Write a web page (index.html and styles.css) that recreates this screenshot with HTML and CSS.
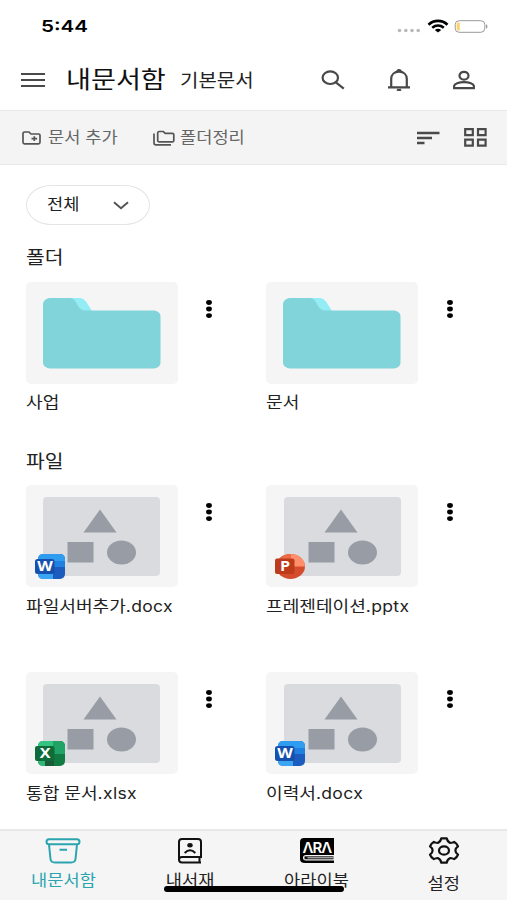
FILE: index.html
```
<!DOCTYPE html>
<html lang="ko">
<head>
  <meta charset="utf-8">
  <meta name="viewport" content="width=device-width">
  <title>내문서함</title>
  <link rel="stylesheet" href="styles.css">
</head>
<body>
  <!-- shared icons -->
  <svg class="defs" width="0" height="0">
    <symbol id="folder" viewBox="0 0 118 71">
      <path fill="#93edf4" d="M24 0h12c4 0 6 2 8 5l5 8H30z"/>
      <path fill="#80d4da" d="M8 0h18c4 0 6 2 8 6 2 4 4 6.500 9 6.500h67c4.500 0 7.500 2.500 7.500 6v46c0 3.500-3 6-7.500 6H8c-4.500 0-8-2.500-8-6V6.500C0 2.500 3.500 0 8 0z"/>
    </symbol>
    <symbol id="preview" viewBox="0 0 117 79">
      <rect width="117" height="79" rx="4" fill="#d9dbdf"/>
      <path fill="#989da5" d="M57 12.500l16.500 23h-33z"/>
      <rect x="24.500" y="45" width="26" height="20.500" fill="#989da5"/>
      <ellipse cx="78.500" cy="55.500" rx="14.500" ry="12" fill="#989da5"/>
    </symbol>
    <symbol id="dots" viewBox="0 0 8 20">
      <ellipse cx="4" cy="3.500" rx="2.900" ry="2.400"/>
      <ellipse cx="4" cy="10" rx="2.900" ry="2.400"/>
      <ellipse cx="4" cy="16.600" rx="2.900" ry="2.400"/>
    </symbol>
    <symbol id="word" viewBox="0 0 30 25">
      <rect x="3" width="27" height="25" rx="5" fill="#1b5cbe"/>
      <path fill="#2f9cf0" d="M8 0h17c3 0 5 2 5 5v2H3V5c0-3 2-5 5-5z"/>
      <path fill="#2080e0" d="M3 7h27v6H3z"/>
      <path fill="#3aa5f2" d="M3 19h15v6H8c-3 0-5-2-5-5z"/>
      <rect y="5" width="19.500" height="15" rx="2.500" fill="#1650ae"/>
    </symbol>
    <symbol id="ppt" viewBox="0 0 30 25">
      <ellipse cx="15.500" cy="12.500" rx="14.500" ry="12.500" fill="#d54c2c"/>
      <path fill="#ff8f6b" d="M15.500 0C24 0 30 5.500 30 12.500H15.500z"/>
      <path fill="#ed6c47" d="M15.500 0v12.500H1C1 5.500 7 0 15.500 0z"/>
      <rect y="4.500" width="19.500" height="15.500" rx="2" fill="#bd3b1b"/>
    </symbol>
    <symbol id="excel" viewBox="0 0 30 25">
      <rect x="3" width="27" height="25" rx="5" fill="#107c41"/>
      <path fill="#33c481" d="M8 0h10v7H3V5c0-3 2-5 5-5z"/>
      <path fill="#21a366" d="M18 0h7c3 0 5 2 5 5v8H18z"/>
      <path fill="#30b878" d="M3 19h7v6H8c-3 0-5-2-5-5z"/>
      <path fill="#185c37" d="M10 19h9v6h-9z"/>
      <rect y="5" width="19.500" height="15" rx="2" fill="#0f6c3a"/>
    </symbol>
  </svg>

  <div class="status">
    <span class="time wide">5:44</span>
    <svg width="92" height="18" viewBox="0 0 92 18">
      <g fill="#b9b9b9">
        <circle cx="2.500" cy="12.500" r="1.800"/>
        <circle cx="8.800" cy="12.500" r="1.800"/>
        <circle cx="15" cy="12.500" r="1.800"/>
        <circle cx="21.200" cy="12.500" r="1.800"/>
      </g>
      <g fill="none" stroke="#000" stroke-width="2.700">
        <path d="M31.500 6.700c5.500-5 13.500-5 19 0"/>
        <path d="M35.200 9.800c3.500-2.900 8.100-2.900 11.600 0"/>
      </g>
      <path d="M37.800 12q3.200-2.300 6.400 0L41 14.500z"/>
      <rect x="58.200" y="2.700" width="29.600" height="11.600" rx="4" fill="#fff" stroke="#999"/>
      <path d="M62.800 4.500H61q-1.300.300-1.300 2v4q0 1.700 1.300 2h1.800z" fill="#fbd36c"/>
      <path d="M89 6q3 2.500 0 5z" fill="#999"/>
    </svg>
  </div>

  <header>
    <svg class="menu" width="24" height="16" viewBox="0 0 24 16" stroke="#4a4a4a" stroke-width="2.200"><path d="M0 2h24M0 8h24M0 14h24"/></svg>
    <h1 class="wide">내문서함</h1>
    <span class="sub wide">기본문서</span>
    <div class="actions">
      <svg width="24" height="20" viewBox="0 0 24 20" fill="none" stroke="#484848" stroke-width="2.200">
        <ellipse cx="9.300" cy="7.700" rx="7.700" ry="6.300"/>
        <path d="M14.800 12.300l8 6.300"/>
      </svg>
      <svg width="22" height="22" viewBox="0 0 22 22" fill="none" stroke="#484848" stroke-width="2.200">
        <path d="M0 18.300h22M3.200 18V10c0-4.300 3.200-7.300 7.800-7.300s7.800 3 7.800 7.300v8"/>
        <path d="M9 2.200q2-2 4 0M9 20.500q2 1.200 4 0"/>
      </svg>
      <svg width="22" height="20" viewBox="0 0 22 20" fill="none" stroke="#484848" stroke-width="2.200">
        <ellipse cx="11" cy="5.700" rx="4.500" ry="3.900"/>
        <path d="M1 18.200v-1.700c0-2.700 5-4.300 10-4.300s10 1.600 10 4.300v1.700z" stroke-linejoin="round"/>
      </svg>
    </div>
  </header>

  <div class="toolbar">
    <svg class="add" width="19" height="14" viewBox="0 0 19 14" fill="none" stroke="#555" stroke-width="1.700">
      <path d="M2.500 1H7l2 2h7.500q1.500 0 1.500 1.300v7q0 1.500-1.500 1.500h-14Q1 12.800 1 11.300v-9Q1 1 2.500 1z"/>
      <path d="M12.300 5.300v4.800M9.500 7.700h5.600"/>
    </svg>
    <span class="label wide">문서 추가</span>
    <svg class="arrange" width="22" height="16" viewBox="0 0 22 16" fill="none" stroke="#555" stroke-width="1.700">
      <path d="M6.300 1.500h4l2 1.800h6.900q1.600 0 1.600 1.300v5.800q0 1.400-1.600 1.400H6.300q-1.600 0-1.600-1.400V2.900q0-1.400 1.600-1.400z"/>
      <path d="M1 3.500V13q0 1.800 2 1.800h15"/>
    </svg>
    <span class="label wide">폴더정리</span>
    <div class="views">
      <svg width="23" height="14" viewBox="0 0 23 14" stroke="#4a4a4a" stroke-width="2.300"><path d="M0 2h22.500M0 7h15M0 12h7.500"/></svg>
      <svg width="23" height="19" viewBox="0 0 23 19" fill="none" stroke="#4a4a4a" stroke-width="2.200">
        <path d="M1.200 1.200h7.600v6H1.200zM14 1.200h7.600v6H14zM1.200 11.600h7.600v6H1.200zM14 11.600h7.600v6H14z"/>
      </svg>
    </div>
  </div>

  <main>
    <div class="filter">
      <span class="wide">전체</span>
      <svg width="16" height="9" viewBox="0 0 16 9" fill="none" stroke="#555" stroke-width="2"><path d="M1 1.300l7 6 7-6"/></svg>
    </div>

    <h2 class="wide">폴더</h2>
    <div class="grid folders">
      <div class="item">
        <div class="thumb"><svg width="118" height="71"><use href="#folder"/></svg></div>
        <svg class="more" width="8" height="20"><use href="#dots"/></svg>
        <p class="wide">사업</p>
      </div>
      <div class="item">
        <div class="thumb"><svg width="118" height="71"><use href="#folder"/></svg></div>
        <svg class="more" width="8" height="20"><use href="#dots"/></svg>
        <p class="wide">문서</p>
      </div>
    </div>

    <h2 class="wide">파일</h2>
    <div class="grid files">
      <div class="item">
        <div class="thumb">
          <svg width="117" height="79"><use href="#preview"/></svg>
          <div class="badge"><svg width="30" height="25"><use href="#word"/></svg><b>W</b></div>
        </div>
        <svg class="more" width="8" height="20"><use href="#dots"/></svg>
        <p class="wide">파일서버추가<span class="ext">.docx</span></p>
      </div>
      <div class="item">
        <div class="thumb">
          <svg width="117" height="79"><use href="#preview"/></svg>
          <div class="badge"><svg width="30" height="25"><use href="#ppt"/></svg><b>P</b></div>
        </div>
        <svg class="more" width="8" height="20"><use href="#dots"/></svg>
        <p class="wide">프레젠테이션<span class="ext">.pptx</span></p>
      </div>
      <div class="item">
        <div class="thumb">
          <svg width="117" height="79"><use href="#preview"/></svg>
          <div class="badge"><svg width="30" height="25"><use href="#excel"/></svg><b>X</b></div>
        </div>
        <svg class="more" width="8" height="20"><use href="#dots"/></svg>
        <p class="wide">통합 문서<span class="ext">.xlsx</span></p>
      </div>
      <div class="item">
        <div class="thumb">
          <svg width="117" height="79"><use href="#preview"/></svg>
          <div class="badge"><svg width="30" height="25"><use href="#word"/></svg><b>W</b></div>
        </div>
        <svg class="more" width="8" height="20"><use href="#dots"/></svg>
        <p class="wide">이력서<span class="ext">.docx</span></p>
      </div>
    </div>
  </main>

  <nav>
    <div class="tab active">
      <svg width="36" height="26" viewBox="0 0 36 26" fill="none" stroke="#2aa5af" stroke-width="2">
        <rect x="1.500" y="1.200" width="33" height="5" rx="2.500"/>
        <path d="M4 6.500l1.500 14.500q.400 3.500 4.500 3.500h16q4.100 0 4.500-3.500L32 6.500M14.500 11.800h7.500"/>
      </svg>
      <span>내문서함</span>
    </div>
    <div class="tab">
      <svg width="26" height="26" viewBox="0 0 26 26" fill="none" stroke="#111" stroke-width="2">
        <path d="M24 24.500H5q-3 0-3-3V4q0-3 3-3h16q3 0 3 3v15H5q-3 0-3 2.500M22.500 19v5.500"/>
        <ellipse cx="13" cy="7.200" rx="2.700" ry="2.200" fill="#111" stroke="none"/>
        <path d="M7.700 15q5.300-5.500 10.600 0"/>
      </svg>
      <span>내서재</span>
    </div>
    <div class="tab">
      <div class="ara">
        <svg width="34" height="26" viewBox="0 0 34 26">
          <path d="M4 0h30v17H6q-3 0-3 2.800T6 22.500h28V25H5q-5 0-5-4V4q0-4 4-4z"/>
          <path d="M4.500 19.800h29" stroke="#111" stroke-width="3"/>
          <path d="M7.500 19.800h26" stroke="#ddd" stroke-width="1"/>
        </svg>
        <b>ΛRΛ</b>
      </div>
      <span>아라이북</span>
    </div>
    <div class="tab settings">
      <svg width="32" height="27" viewBox="0 0 32 27" fill="none" stroke="#111" stroke-width="2.200" stroke-linejoin="round">
        <path d="M13.300 1.300h5.400q.700 3.500 3.500 4.700 2.300-.200 4-1.100 2.800 1.600 3.800 4.500-2.600 1.700-2.600 4.100t2.600 4.100q-1 2.900-3.800 4.500-1.700-.900-4-1.100-2.800 1.200-3.500 4.700h-5.400q-.700-3.500-3.500-4.700-2.300.200-4 1.100Q3 20.500 2 17.600q2.600-1.700 2.600-4.100T2 9.400q1-2.900 3.800-4.500 1.700.900 4 1.100 2.800-1.200 3.500-4.700z"/>
        <ellipse cx="16" cy="13.500" rx="5" ry="4.200"/>
      </svg>
      <span>설정</span>
    </div>
    <div class="home-bar"></div>
  </nav>
</body>
</html>
```

FILE: styles.css
```
* {
  box-sizing: border-box;
}
body {
  margin: 0;
  height: 900px;
  display: flex;
  flex-direction: column;
  overflow: hidden;
  background: #fff;
  color: #222;
  font-family: "Noto Sans CJK KR", sans-serif;
}
svg {
  display: block;
  flex-shrink: 0;
}
.defs {
  position: absolute;
}
h1, h2, p {
  margin: 0;
  font-weight: 400;
}
.wide {
  transform: scaleX(1.13);
  transform-origin: left center;
  white-space: nowrap;
}
.status {
  height: 50px;
  padding: 18px 18px 0 41px;
  display: flex;
  justify-content: space-between;
}
.time {
  font: 600 16.5px/17px Inter, sans-serif;
  color: #000;
  transform: scaleX(1.25);
}
header {
  height: 60px;
  display: flex;
  align-items: center;
  padding: 0 32px 0 21px;
}
h1 {
  width: 114px;
  margin-left: 21px;
  font-size: 24px;
  line-height: 34px;
  color: #111;
  margin-top: -4px;
  transform: scaleX(1.15);
}
.sub {
  font-size: 18px;
  line-height: 24px;
  margin-top: -3px;
  transform: scaleX(1.11);
}
.actions {
  display: flex;
  align-items: center;
  gap: 43px;
  margin-left: auto;
}
.toolbar {
  height: 55px;
  background: #f4f4f4;
  border-top: 1.5px solid #e8e8e8;
  border-bottom: 1.5px solid #e8e8e8;
  display: flex;
  align-items: center;
  padding: 0 20px 0 22px;
}
.label {
  color: #666;
  font-size: 16px;
  line-height: 24px;
  margin: -4px 0 0 7px;
  width: 105px;
  transform: scaleX(1.1);
}
.arrange + .label {
  margin-left: 5px;
}
.views {
  display: flex;
  align-items: center;
  gap: 24px;
  margin-left: auto;
}
main {
  flex: 1;
  padding: 20px 0 0 25.5px;
}
.filter {
  width: 124px;
  height: 40px;
  border: 1.5px solid #e4e4e4;
  border-radius: 25px / 20px;
  display: flex;
  align-items: center;
  justify-content: space-between;
  padding: 0 20px 4px 20px;
  font-size: 16px;
}
.filter .wide {
  transform: scaleX(1.1);
}
.filter svg {
  margin-top: 5px;
}
h2 {
  font-size: 18px;
  line-height: 26px;
  margin-top: 18px;
  width: 100px;
}
.grid {
  display: grid;
  grid-template-columns: 240.5px 240.5px;
}
.folders {
  margin-top: 13px;
  height: 147px;
}
.files {
  margin-top: 12px;
  row-gap: 54px;
}
.item {
  display: grid;
  grid-template-columns: 152px 1fr;
  grid-template-rows: 102px 31px;
}
.thumb {
  position: relative;
  background: #f5f5f5;
  border-radius: 5px;
  display: flex;
  align-items: center;
  justify-content: center;
}
.more {
  margin: 17px 0 0 27.5px;
  fill: #000;
}
.item p {
  font-size: 16px;
  line-height: 24px;
  padding-top: 6px;
  width: 140px;
}
.folders p {
  padding-top: 5px;
}
.ext {
  font-family: Inter, sans-serif;
  font-size: 15.5px;
  letter-spacing: 0.3px;
}
.badge {
  position: absolute;
  left: 9px;
  top: 69px;
}
.badge b {
  position: absolute;
  left: 0;
  top: 4px;
  width: 20px;
  text-align: center;
  font: 700 14px/15px "Open Sans", sans-serif;
  color: #fff;
  transform: scaleX(1.15);
}
nav {
  position: relative;
  height: 71px;
  background: #f5f5f5;
  border-top: 2px solid #e8e8e8;
  display: flex;
}
.tab {
  flex: 1;
  display: flex;
  flex-direction: column;
  align-items: center;
  padding-top: 7px;
}
.tab span {
  margin-top: 3px;
  font-size: 16px;
  line-height: 24px;
  transform: scaleX(1.1);
}
.tab.settings {
  padding-top: 6px;
}
.settings span {
  margin-top: 6px;
}
.active {
  color: #2aa5af;
}
.ara {
  position: relative;
}
.ara b {
  position: absolute;
  left: 0;
  top: 2px;
  width: 34px;
  text-align: center;
  font: 600 15px/15px Inter, sans-serif;
  letter-spacing: -1px;
  color: #fff;
}
.home-bar {
  position: absolute;
  left: 164px;
  top: 55px;
  width: 180px;
  height: 5.5px;
  border-radius: 3px;
  background: #000;
}
```
